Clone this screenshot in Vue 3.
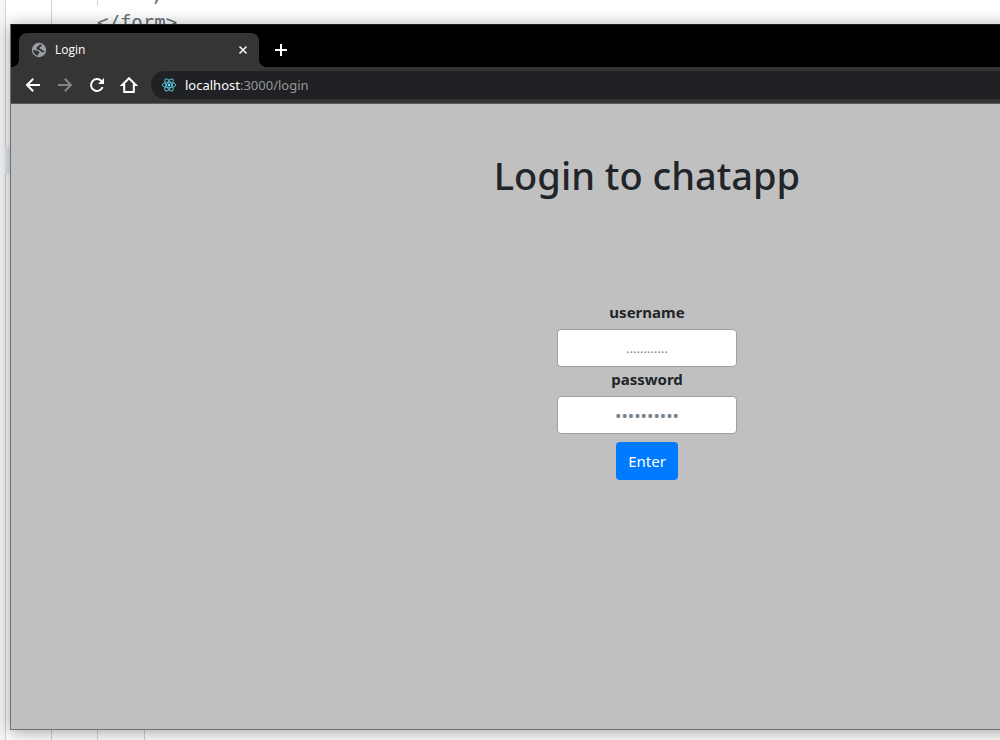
<script setup>
import { ref } from 'vue'

const username = ref('')
const password = ref('')
const petals = [0, 60, 120]
</script>

<template>
  <div class="desktop">
    <div class="editor" aria-hidden="true">
      <i class="guide first"></i>
      <i class="guide second"></i>
      <i class="guide third"></i>
      <i class="guide fourth"></i>
      <i class="marker"></i>
      <div class="code"><span class="semi">;</span><br />&lt;/form&gt;</div>
    </div>

    <div class="browser">
      <header class="tabs">
        <div class="tab">
          <svg class="globe" viewBox="0 0 16 16" width="16" height="16">
            <circle cx="8" cy="8" r="7.2" fill="#9aa0a6" />
            <path
              d="M8.6 2.3 11 3 10.6 4.3 8.6 5V6.4L10.6 7.2 11.2 8.6 13.6 8.8 12.8 10.6 10.4 10 9 8.4 6 7.6 5.2 6 6.4 4.4 8 3.8Z"
              fill="#353535"
            />
            <path d="M2 7.8 4.8 8.6 6.8 8.8 8.4 10.2 8 11.8 6.8 12.6V13.8L4.4 12.8 2.6 10.6Z" fill="#353535" />
          </svg>
          <span class="tab-title">Login</span>
          <button class="close" type="button" aria-label="Close tab">
            <svg viewBox="0 0 10 10" width="10" height="10">
              <path d="M1.5 1.5 8.5 8.5M8.5 1.5 1.5 8.5" stroke="#f1f1f1" stroke-width="1.7" />
            </svg>
          </button>
        </div>
        <button class="new-tab" type="button" aria-label="New tab">
          <svg viewBox="0 0 12 12" width="12" height="12">
            <path d="M6 0v12M0 6h12" stroke="#fff" stroke-width="2" />
          </svg>
        </button>
      </header>

      <nav class="toolbar">
        <button type="button" aria-label="Back">
          <svg viewBox="0 0 16 16" width="16" height="16">
            <path d="M15 8H2.5M8.2 1.8 2 8l6.2 6.2" fill="none" stroke="#fff" stroke-width="2" />
          </svg>
        </button>
        <button type="button" aria-label="Forward">
          <svg viewBox="0 0 16 16" width="16" height="16">
            <path d="M1 8h12.5M7.8 1.8 14 8l-6.2 6.2" fill="none" stroke="#858585" stroke-width="2" />
          </svg>
        </button>
        <button type="button" aria-label="Reload">
          <svg viewBox="0 0 16 16" width="16" height="16">
            <path d="M13.6 10.2A6 6 0 1 1 12.4 3.9L14 5.5" fill="none" stroke="#fff" stroke-width="2" />
            <path d="M15 1v6H9z" fill="#fff" />
          </svg>
        </button>
        <button type="button" aria-label="Home">
          <svg viewBox="0 0 18 18" width="18" height="18">
            <path d="M9 2.2 2.2 9H4.2v7h9.6V9h2z" fill="none" stroke="#fff" stroke-width="2" />
          </svg>
        </button>
        <div class="address">
          <svg viewBox="-8 -8 16 16" width="16" height="16">
            <g fill="none" stroke="#58b9d0" stroke-width="1">
              <ellipse v-for="a in petals" :key="a" rx="6.7" ry="2.7" :transform="`rotate(${a})`" />
            </g>
            <circle r="1.4" fill="#61dafb" />
          </svg>
          <span class="url"><b>localhost</b>:3000/login</span>
        </div>
      </nav>

      <main class="page">
        <h1>Login to chatapp</h1>
        <form @submit.prevent>
          <label for="username">username</label>
          <input id="username" v-model="username" type="text" placeholder="............" />
          <label for="password">password</label>
          <input id="password" v-model="password" type="password" placeholder="••••••••••" />
          <button class="enter" type="submit">Enter</button>
        </form>
      </main>
    </div>
  </div>
</template>

<style>
body {
  margin: 0;
}
</style>

<style scoped>
.desktop {
  position: relative;
  min-height: 100vh;
  overflow: hidden;
  background: linear-gradient(90deg, #f4f7fa 5px, #fff 5px);
  font-family: "Noto Sans", "Open Sans", sans-serif;
}
.guide {
  position: absolute;
  top: 0;
  bottom: 0;
  width: 1px;
  background: #d3d3d3;
}
.first {
  left: 5px;
}
.second {
  left: 51px;
}
.third {
  left: 97px;
  background: linear-gradient(#d3d3d3 6px, transparent 6px 50%, #d3d3d3 50%);
}
.fourth {
  left: 144px;
  top: 50%;
}
.marker {
  position: absolute;
  left: 5px;
  top: 147px;
  width: 5px;
  height: 27px;
  background: #e8edf2;
}
.code {
  position: absolute;
  left: 97px;
  top: -20px;
  font: 19px/28px "DejaVu Sans Mono", monospace;
  color: #687078;
}
.semi {
  padding-left: 54px;
}
.browser {
  position: absolute;
  top: 24px;
  right: -284px;
  bottom: 10px;
  left: 10px;
  display: flex;
  flex-direction: column;
  border: 1px solid #707070;
  border-top-color: #1b1d1e;
  background: #c0c0c0;
  box-shadow: 0 2px 16px rgba(0, 0, 0, 0.38);
}
button {
  display: grid;
  place-items: center;
  padding: 0;
  border: 0;
  background: none;
}
.tabs {
  display: flex;
  align-items: flex-end;
  height: 42px;
  padding-left: 8px;
  background: #000;
}
.tab {
  position: relative;
  display: flex;
  align-items: center;
  box-sizing: border-box;
  width: 240px;
  height: 34px;
  padding: 0 9px 0 12px;
  border-radius: 8px 8px 0 0;
  background: #353535;
}
.tab::before,
.tab::after {
  content: "";
  position: absolute;
  bottom: 0;
  width: 8px;
  height: 8px;
}
.tab::before {
  right: 100%;
  background: radial-gradient(circle at 0 0, transparent 8px, #353535 8px);
}
.tab::after {
  left: 100%;
  background: radial-gradient(circle at 100% 0, transparent 8px, #353535 8px);
}
.tab-title {
  flex: 1;
  margin-left: 8px;
  font-family: "Open Sans", "Noto Sans", sans-serif;
  font-size: 12px;
  line-height: 16px;
  color: #fff;
}
.close {
  width: 14px;
  height: 14px;
}
.new-tab {
  width: 28px;
  height: 34px;
  margin-left: 8px;
}
.toolbar {
  display: flex;
  align-items: center;
  gap: 4px;
  box-sizing: border-box;
  height: 37px;
  padding-left: 8px;
  border-bottom: 1px solid #5c5a5c;
  background: #353535;
}
.toolbar button {
  width: 28px;
  height: 28px;
}
.address {
  display: flex;
  flex: 1;
  align-items: center;
  gap: 8px;
  height: 28px;
  margin-left: 4px;
  padding-left: 10px;
  border-radius: 14px 0 0 14px;
  background: #202124;
}
.url {
  font-size: 13px;
  line-height: 20px;
  color: #969696;
}
.url b {
  font-weight: 400;
  color: #fff;
}
.page {
  display: flex;
  flex: 1;
  flex-direction: column;
  align-items: center;
  padding-top: 47px;
  color: #212529;
}
h1 {
  margin: 0;
  font-size: 38px;
  line-height: 48px;
  font-weight: 500;
}
form {
  display: flex;
  flex-direction: column;
  align-items: center;
  margin-top: 101px;
}
label {
  margin-bottom: 5px;
  font-size: 15px;
  line-height: 24px;
  font-weight: 700;
}
input {
  box-sizing: border-box;
  width: 180px;
  height: 38px;
  padding: 6px 12px;
  border: 1px solid #a0a0a0;
  border-radius: 4px;
  background: #fff;
  font: 13px/24px "Noto Sans", sans-serif;
  text-align: center;
  color: #495057;
}
#password {
  font-size: 17px;
}
input::placeholder {
  color: #7d848b;
  opacity: 1;
}
.enter {
  height: 38px;
  margin-top: 8px;
  padding: 0 12px;
  border-radius: 4px;
  background: #007bff;
  color: #fff;
  font: 15px/24px "Noto Sans", sans-serif;
}
</style>
